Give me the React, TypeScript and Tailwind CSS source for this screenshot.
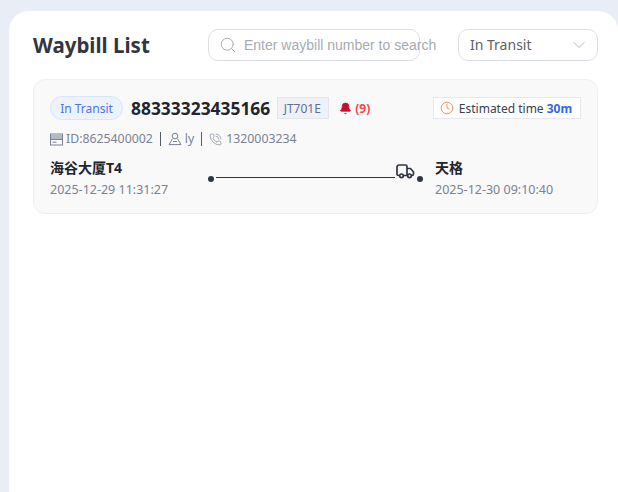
import { ChevronDown, Search, Clock, Bell, PhoneCall } from "lucide-react";

const font = "font-['Noto_Sans','Noto_Sans_CJK_SC',sans-serif]";

function Truck() {
  return (
    <svg width="19" height="15" viewBox="0 0 19 15" fill="none" stroke="#2f3542" strokeWidth="1.7" className="mb-[3px] ml-px shrink-0">
      <path d="M3.5 11.5H2.5a1.5 1.5 0 0 1-1.5-1.5V3a2 2 0 0 1 2-2h6.5a1.5 1.5 0 0 1 1.5 1.5v9H7.5" />
      <path d="M11 4.5h3.5l3 3.5v2a1.5 1.5 0 0 1-1.5 1.5h-.5M11 11.5h.7" />
      <circle cx="5.5" cy="11.8" r="1.8" />
      <circle cx="13.5" cy="11.8" r="1.8" />
    </svg>
  );
}

function IdIcon() {
  return (
    <svg width="13" height="13" viewBox="0 0 13 13" fill="none" className="mr-[3px] shrink-0">
      <rect x="0.5" y="1" width="12" height="11" stroke="#7a8296" />
      <rect x="1" y="1.5" width="11" height="4.5" fill="#b5b9c2" />
      <path d="M0.5 6.5h12M2.5 9.2h4" stroke="#7a8296" />
    </svg>
  );
}

function PersonIcon() {
  return (
    <svg width="14" height="14" viewBox="0 0 14 14" fill="none" stroke="#7a8296" strokeWidth="1" className="mr-[3px] shrink-0">
      <circle cx="7" cy="4" r="2.8" />
      <path d="M4.6 6.6 1 12.6h12L9.4 6.6M5 9.5h4" />
    </svg>
  );
}

export default function App() {
  return (
    <div className={`h-[492px] w-[618px] overflow-hidden bg-[#e8edf6] pl-[9px] pt-[11px] ${font}`}>
      <div className="h-[481px] rounded-t-[20px] bg-white pl-6 pr-5 pt-[18px]">
        <div className="flex h-8 items-center">
          <h1 className="text-[20.5px] leading-8 font-bold text-[#333640]">Waybill List</h1>
          <div className="ml-auto flex h-8 w-[212px] items-center gap-[7px] rounded-[10px] border border-[#dcdfe6] pl-[10px] font-['Liberation_Sans',sans-serif] text-[14px] text-[#a8abb2]">
            <Search size={18} strokeWidth={1.3} className="shrink-0 text-[#a8abb2]" />
            <span className="whitespace-nowrap">Enter waybill number to search</span>
          </div>
          <div className="ml-[38px] flex h-8 w-[140px] items-center justify-between rounded-[10px] border border-[#dcdfe6] pl-[11px] pr-2 text-[14px] text-[#606266]">
            <span className="pb-[2px]">In Transit</span>
            <ChevronDown size={20} strokeWidth={1} className="text-[#a8abb2]" />
          </div>
        </div>

        <div className="mt-[18px] h-[135px] w-[565px] rounded-xl border border-[#eeeff2] bg-[#f9f9fa] px-4 pt-4">
          <div className="flex h-6 items-center">
            <span className="flex h-6 w-[73px] items-center justify-center rounded-full border border-[#d9e4ff] bg-[#edf2ff] pt-px text-[12px] text-[#4f73ee]">
              In Transit
            </span>
            <span className="ml-2 pt-px text-[17.4px] font-bold text-[#22252c]">88333323435166</span>
            <span className="ml-[7px] flex h-[22px] w-[52px] items-center justify-center border border-[#e3e6ee] bg-[#eff1f6] pt-px pr-[2px] text-[12px] text-[#5f6f96]">
              JT701E
            </span>
            <Bell size={13} fill="#c8102e" strokeWidth={1.5} className="ml-[10px] text-[#c8102e]" />
            <span className="ml-[3px] pt-px text-[12px] font-bold text-[#f4474f]">(9)</span>
            <div className="ml-auto flex h-[22px] w-[148px] items-center justify-center gap-[5px] border border-[#e6e8ee] bg-white pr-[2px] text-[12px] text-[#3b4150]">
              <Clock size={14} strokeWidth={1.7} className="text-[#f0965a]" />
              <span className="whitespace-nowrap pt-px">
                Estimated time <b className="text-[#3366f0]">30m</b>
              </span>
            </div>
          </div>

          <div className="mt-[9px] flex h-5 items-center text-[12.3px] text-[#7a8296]">
            <IdIcon />
            <span>ID:8625400002</span>
            <span className="mx-[7px] h-[14px] w-px bg-[#555b68]" />
            <PersonIcon />
            <span>ly</span>
            <span className="mx-[7px] h-[14px] w-px bg-[#555b68]" />
            <PhoneCall size={13} strokeWidth={1.2} className="mr-[4px] text-[#7a8296]" />
            <span>1320003234</span>
          </div>

          <div className="mt-[9px] flex">
            <div className="w-[157px]">
              <div className="text-[14px] leading-5 font-bold text-[#22252c]">海谷大厦T4</div>
              <div className="mt-[3px] text-[12.5px] leading-[18px] text-[#7a8296]">2025-12-29 11:31:27</div>
            </div>
            <div className="flex h-[24px] w-[216px] items-end">
              <span className="ml-px size-[6px] shrink-0 rounded-full bg-[#2f3542]" />
              <span className="mb-[4px] ml-[2px] h-px w-[179px] bg-[#2f3542]" />
              <Truck />
              <span className="ml-[2px] size-[6px] shrink-0 rounded-full bg-[#2f3542]" />
            </div>
            <div className="ml-[12px]">
              <div className="text-[14px] leading-5 font-bold text-[#22252c]">天格</div>
              <div className="mt-[3px] text-[12.5px] leading-[18px] text-[#7a8296]">2025-12-30 09:10:40</div>
            </div>
          </div>
        </div>
      </div>
    </div>
  );
}
